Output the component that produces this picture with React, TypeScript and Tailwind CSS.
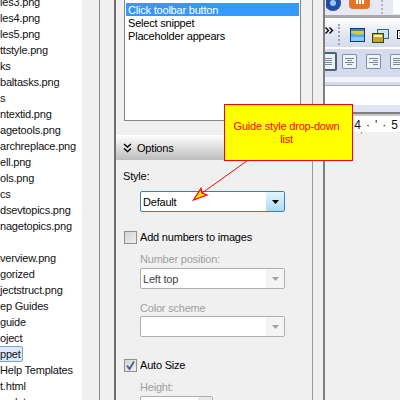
import React from "react";

const tree: [string, boolean?][] = [
  ["les3.png"], ["les4.png"], ["les5.png"], ["ttstyle.png"], ["ks"], ["baltasks.png"], ["s"],
  ["ntextid.png"], ["agetools.png"], ["archreplace.png"], ["ell.png"], ["ols.png"], ["cs"],
  ["dsevtopics.png"], ["nagetopics.png"], [""], ["verview.png"], ["gorized"], ["jectstruct.png"],
  ["ep Guides"], ["guide"], ["oject"], ["ppet", true], ["Help Templates"], ["t.html"], ["mplates"],
];

function Check({ checked }: { checked?: boolean }) {
  return (
    <div className="w-[13px] h-[13px] border border-[#8e8f8f] bg-gradient-to-br from-[#d4d4d4] to-[#f0f0f0] shrink-0 flex items-center justify-center">
      {checked && (
        <svg width="11" height="11" viewBox="0 0 11 11">
          <path d="M2 5.5 L4.5 9 L9 1.5" fill="none" stroke="#4a5f97" strokeWidth="1.8" />
        </svg>
      )}
    </div>
  );
}

function Combo({ text, active }: { text?: string; active?: boolean }) {
  return (
    <div
      className={
        active
          ? "ml-[24px] w-[145px] h-[21px] border border-[#3c7fb1] rounded-[2px] bg-white flex items-center text-black"
          : "ml-[24px] w-[145px] h-[21px] border border-[#afafaf] rounded-[2px] bg-white flex items-center text-[#444]"
      }
    >
      <span className="pl-[2px] pt-[1px] flex-1">{text}</span>
      <div
        className={
          active
            ? "w-[18px] h-full bg-gradient-to-b from-[#e5f4fc] to-[#a9dbf6] flex items-center justify-center"
            : "w-[18px] h-full bg-[#f4f4f4] flex items-center justify-center"
        }
      >
        <svg width="7" height="4" viewBox="0 0 7 4">
          <path d="M0 0H7L3.5 4Z" fill={active ? "#000" : "#a0a0a0"} />
        </svg>
      </div>
    </div>
  );
}

function Align({ lines, active }: { lines: string[]; active?: boolean }) {
  return (
    <div
      className={
        active
          ? "w-[20px] h-[19px] border-2 border-[#4d6078] rounded-[2px] bg-[#e9f0f6] flex flex-col justify-center gap-[1px] px-[3px] shrink-0"
          : "w-[15px] h-[15px] border border-[#7d90a5] rounded-[1px] bg-[#eef3f8] flex flex-col justify-center gap-[1px] px-[2px] shrink-0"
      }
    >
      {lines.map((c, i) => (
        <div key={i} className={c} />
      ))}
    </div>
  );
}

export default function App() {
  return (
    <div
      className="relative w-[400px] h-[400px] overflow-hidden flex bg-[#f0f0f0] text-[11px] leading-[13px] tracking-[-0.2px] text-black"
      style={{ fontFamily: '"Liberation Sans", Arial, sans-serif' }}
    >
      {/* tree */}
      <div className="w-[82px] h-[406px] bg-white overflow-hidden -mt-[6px] shrink-0 text-[#111]">
        {tree.map(([t, sel], i) => (
          <div key={i} className="h-[16px] flex items-center whitespace-nowrap">
            {sel ? (
              <span className="h-[16px] w-[23px] border border-l-0 border-[#7da2ce] rounded-r-[2px] bg-[#dceafc] flex items-center">{t}</span>
            ) : (
              <span>{t}</span>
            )}
          </div>
        ))}
      </div>
      <div className="w-[17px] shrink-0" />
      <div className="w-px bg-[#8a8a8a] shrink-0" />
      <div className="w-[14px] shrink-0" />
      <div className="w-[2px] bg-[#6f6f6f] shrink-0" />

      {/* panel */}
      <div className="w-[196px] shrink-0 flex flex-col">
        <div className="ml-[8px] w-[177px] h-[123px] -mt-[2px] shrink-0 border border-[#828790] bg-white p-[1px] pt-[4px]">
          <div className="h-[13px] bg-[#3399ff] text-white pl-[2px] pt-[1px]">Click toolbar button</div>
          <div className="h-[13px] pl-[2px] pt-[1px]">Select snippet</div>
          <div className="h-[13px] pl-[2px] pt-[1px]">Placeholder appears</div>
        </div>
        <div className="mt-[14px] h-[25px] shrink-0 bg-gradient-to-b from-white to-[#bdbdbd] flex items-center pl-[7px] gap-[5px]">
          <svg width="9" height="10" viewBox="0 0 9 10">
            <path d="M1 1 L4.5 4 L8 1 M1 5.5 L4.5 8.5 L8 5.5" fill="none" stroke="#000" strokeWidth="1.4" />
          </svg>
          <span className="pt-[1px]">Options</span>
        </div>
        <div className="pl-[7px] mt-[10px] h-[13px]">Style:</div>
        <div className="mt-[8px]"><Combo text="Default" active /></div>
        <div className="mt-[19px] ml-[8px] flex items-center gap-[3px]"><Check /><span>Add numbers to images</span></div>
        <div className="mt-[9px] ml-[24px] h-[13px] text-[#a0a0a0]">Number position:</div>
        <div className="mt-[2px]"><Combo text="Left top" /></div>
        <div className="mt-[13px] ml-[24px] h-[13px] text-[#a0a0a0]">Color scheme</div>
        <div className="mt-[1px]"><Combo /></div>
        <div className="mt-[22px] ml-[8px] flex items-center gap-[3px]"><Check checked /><span>Auto Size</span></div>
        <div className="mt-[9px] ml-[24px] h-[13px] text-[#a0a0a0]">Height:</div>
        <div className="mt-[2px] ml-[24px] w-[73px] h-[20px] shrink-0 border border-[#afafaf] rounded-[2px] bg-white flex justify-end">
          <div className="w-[14px] h-full bg-[#e8e8e8]" />
        </div>
      </div>

      <div className="w-px bg-[#9a9a9a] shrink-0" />
      <div className="w-[10px] shrink-0" />
      <div className="w-[2px] bg-[#808080] shrink-0" />

      {/* document side */}
      <div className="flex-1 min-w-0 flex flex-col overflow-hidden">
        <div className="h-[15px] shrink-0 bg-[#e6e9f4] flex items-start">
          <svg width="16" height="14" viewBox="0 0 16 14" className="ml-[1px] shrink-0">
            <circle cx="7" cy="3" r="8" fill="#1f4fa8" />
            <circle cx="7" cy="3" r="3" fill="#9ec4ef" />
          </svg>
          <div className="ml-[7px] w-[21px] h-[9px] rounded-b-[4px] bg-[#e2752a] flex justify-center gap-[1px] shrink-0">
            <div className="w-[2px] h-[4px] bg-white" />
            <div className="w-[2px] h-[4px] bg-white" />
            <div className="w-[2px] h-[4px] bg-white" />
          </div>
          <div className="ml-[11px] w-0 h-[14px] border-l-2 border-dotted border-[#aeb4c4] shrink-0" />
          <div className="ml-[10px] w-[8px] h-[14px] bg-white shrink-0" />
        </div>
        <div className="h-[3px] shrink-0 bg-[#a9a9a9]" />
        <div className="h-[29px] shrink-0 bg-gradient-to-b from-white via-[#e6e9f4] to-[#d5dbec] flex items-start">
          <svg width="9" height="7" viewBox="0 0 9 7" className="mt-[9px] shrink-0">
            <path d="M0.5 0.5 L3.5 3.5 L0.5 6.5 M4.5 0.5 L7.5 3.5 L4.5 6.5" fill="none" stroke="#000" strokeWidth="1.4" />
          </svg>
          <div className="ml-[4px] mt-[6px] w-0 h-[21px] border-l-2 border-dotted border-[#9aa2b5] shrink-0" />
          <svg width="15" height="14" viewBox="0 0 15 14" className="ml-[10px] mt-[10px] shrink-0">
            <rect x="0.5" y="0.5" width="14" height="13" fill="#53a8ee" stroke="#0a3c8c" />
            <rect x="1" y="1" width="13" height="2" fill="#4a9060" />
            <path d="M1 3 H14 V6 Q7 8 1 5Z" fill="#d8c848" />
            <rect x="1" y="9" width="13" height="4" fill="#8cc8f8" />
          </svg>
          <svg width="17" height="14" viewBox="0 0 17 14" className="ml-[7px] mt-[11px] shrink-0">
            <rect x="5.5" y="0.5" width="11" height="9" fill="#cfe3f2" stroke="#2f6f6f" />
            <rect x="0.5" y="4.5" width="11" height="9" fill="#c8a820" stroke="#30432f" />
            <rect x="2" y="6" width="8" height="2" fill="#f4f0d0" />
          </svg>
          <svg width="12" height="14" viewBox="0 0 12 14" className="ml-[8px] mt-[11px] shrink-0">
            <rect x="0.5" y="1.5" width="11" height="8" fill="#fff" stroke="#000" />
            <path d="M2 4H9M2 7H7" stroke="#555" strokeDasharray="1 1" />
          </svg>
        </div>
        <div className="h-[2px] shrink-0 bg-white" />
        <div className="h-[28px] shrink-0 bg-[#d5dbec] flex items-start pt-[3px]">
          <div className="-ml-[8px]"><Align active lines={["h-px w-full bg-[#7d8a99]", "h-px w-full bg-[#7d8a99]", "h-px w-full bg-[#7d8a99]", "h-px w-full bg-[#7d8a99]"]} /></div>
          <div className="ml-[5px] mt-[2px]"><Align lines={["h-px w-[9px] mx-auto bg-[#7d8a99]", "h-px w-[5px] mx-auto bg-[#7d8a99]", "h-px w-[9px] mx-auto bg-[#7d8a99]", "h-px w-[5px] mx-auto bg-[#7d8a99]"]} /></div>
          <div className="ml-[9px] mt-[2px]"><Align lines={["h-px w-[9px] ml-auto bg-[#7d8a99]", "h-px w-[5px] ml-auto bg-[#7d8a99]", "h-px w-[9px] ml-auto bg-[#7d8a99]", "h-px w-[5px] ml-auto bg-[#7d8a99]"]} /></div>
          <div className="ml-[9px] mt-[2px]"><Align lines={["h-px w-full bg-[#7d8a99]", "h-px w-full bg-[#7d8a99]", "h-px w-full bg-[#7d8a99]", "h-px w-full bg-[#7d8a99]"]} /></div>
        </div>
        <div className="h-[5px] shrink-0 bg-[#f2f4fa]" />
        <div className="h-[3px] shrink-0 bg-[#d5dbec]" />
        <div className="h-px shrink-0 bg-[#a9a9a9]" />
        <div className="h-[19px] shrink-0 bg-white" />
        <div className="h-[7px] shrink-0 bg-[#e0e4f2]" />
        <div className="h-[2px] shrink-0 bg-[#7f7f7f]" />
        <div className="h-[2px] shrink-0 bg-[#c8c8c8]" />
        <div className="h-[16px] shrink-0 bg-white flex items-center justify-end pr-[2px] pt-[3px] text-[12px] tracking-normal text-[#111] gap-[5px]">
          <span>4</span><span>·</span><span>'</span><span>·</span><span>5</span>
        </div>
        <div className="flex-1 bg-[#f0f0f0]">
          <div className="ml-[36px] w-px h-[2px] bg-[#999]" />
        </div>
      </div>

      {/* callout */}
      <div className="absolute left-[224px] top-[104px] w-[129px] h-[57px] border border-[#ff0000] bg-[#ffff00] text-[#ff0000] flex items-center justify-center text-center pl-[6px] pr-[10px]">
        Guide style drop-down list
      </div>
      <svg className="absolute left-[185px] top-[155px]" width="70" height="50" viewBox="0 0 70 50">
        <path d="M62.5 5.5 L17 38" fill="none" stroke="#ff0000" strokeWidth="1" />
        <path d="M8.5 45 L16 33.5 L17 38 L22 40 Z" fill="#ffe600" stroke="#ff0000" strokeWidth="1.3" />
      </svg>
    </div>
  );
}
